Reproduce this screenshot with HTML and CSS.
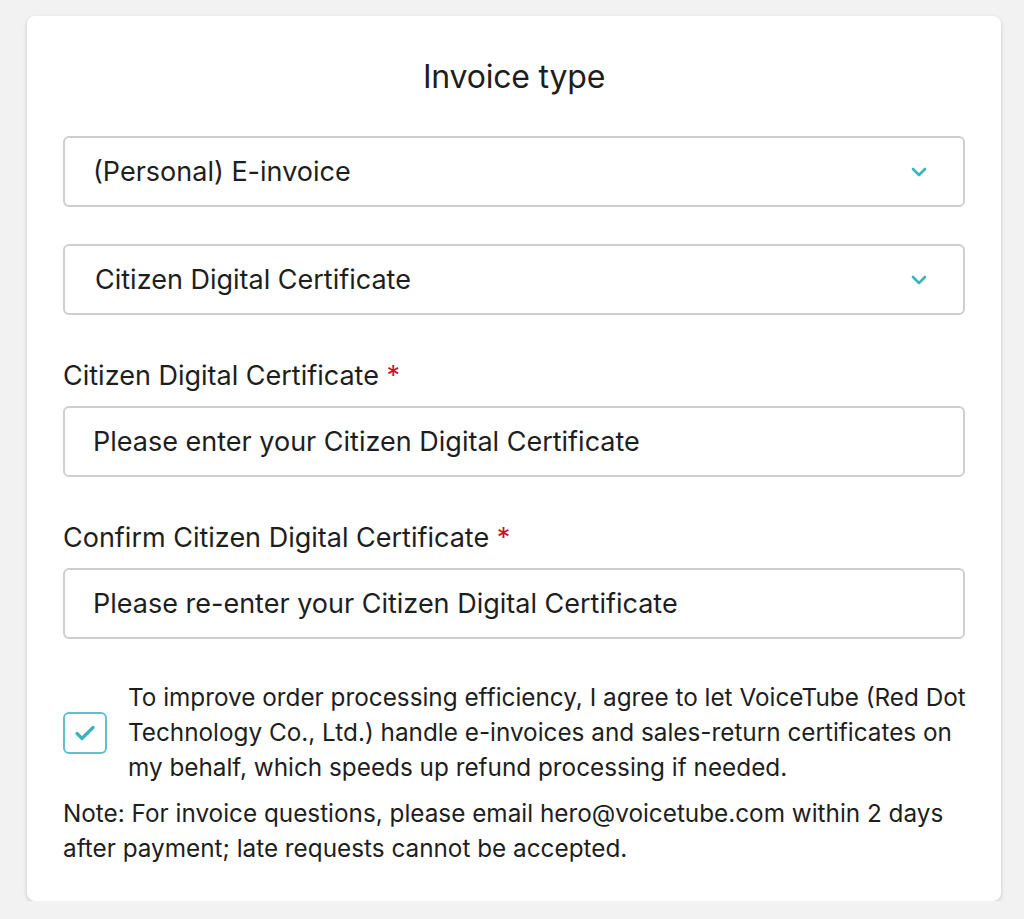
FILE: index.html
```html
<!DOCTYPE html>
<html lang="en">
<head>
    <meta charset="UTF-8">
    <title>Invoice type</title>
    <link rel="stylesheet" href="styles.css">
</head>
<body>
    <div class="card">
        <h2 class="title">Invoice type</h2>

        <div class="select">
            <span>(Personal) E-invoice</span>
            <svg class="chevron" width="16" height="10" viewBox="0 0 16 10"><path d="M2 2l6 6 6-6" fill="none" stroke="#3bb3be" stroke-width="2.6" stroke-linecap="round" stroke-linejoin="round"/></svg>
        </div>

        <div class="select second">
            <span>Citizen Digital Certificate</span>
            <svg class="chevron" width="16" height="10" viewBox="0 0 16 10"><path d="M2 2l6 6 6-6" fill="none" stroke="#3bb3be" stroke-width="2.6" stroke-linecap="round" stroke-linejoin="round"/></svg>
        </div>

        <label class="label">Citizen Digital Certificate <span class="req">*</span></label>
        <div class="input">Please enter your Citizen Digital Certificate</div>

        <label class="label">Confirm Citizen Digital Certificate <span class="req">*</span></label>
        <div class="input">Please re-enter your Citizen Digital Certificate</div>

        <div class="agree">
            <div class="checkbox">
                <svg width="22" height="18" viewBox="0 0 22 18"><path d="M3 9.5l5 5L19 3.5" fill="none" stroke="#3bb3be" stroke-width="3.2" stroke-linecap="round" stroke-linejoin="round"/></svg>
            </div>
            <p>To improve order processing efficiency, I agree to let VoiceTube (Red Dot Technology Co., Ltd.) handle e-invoices and sales-return certificates on my behalf, which speeds up refund processing if needed.</p>
        </div>

        <p class="note">Note: For invoice questions, please email hero@voicetube.com within 2 days after payment; late requests cannot be accepted.</p>
    </div>
</body>
</html>
```

FILE: styles.css
```css
body {
    margin: 0;
    background-color: #f2f2f2;
    font-family: Inter, 'Liberation Sans', sans-serif;
    color: #1e1e1e;
}

.card {
    width: 974px;
    margin: 16px 0 0 27px;
    padding: 37px 36px 35px;
    box-sizing: border-box;
    background-color: #fff;
    border-radius: 8px;
    box-shadow: 0 2px 4px rgba(0, 0, 0, 0.18);
}

.title {
    margin: 0 0 35px;
    text-align: center;
    font-size: 32px;
    font-weight: 400;
    line-height: 48px;
    letter-spacing: -0.2px;
}

.select,
.input {
    height: 71px;
    box-sizing: border-box;
    border: 2px solid #cfcfcf;
    border-radius: 6px;
    display: flex;
    align-items: center;
    padding: 0 28px;
    font-size: 27px;
}

.select {
    justify-content: space-between;
    padding-right: 36px;
}

.second {
    margin-top: 37px;
    padding-left: 30px;
}

.label {
    display: block;
    margin: 43px 0 12px;
    font-size: 27px;
    line-height: 36px;
}

.req {
    color: #c8102e;
}

.agree {
    display: flex;
    align-items: center;
    gap: 21px;
    margin: 41px -14px 0 0;
}

.checkbox {
    flex: none;
    width: 44px;
    height: 42px;
    box-sizing: border-box;
    border: 2px solid #5fc1c9;
    border-radius: 6px;
    display: flex;
    align-items: center;
    justify-content: center;
}

.agree p {
    margin: 0;
    font-size: 24.3px;
    line-height: 35px;
}

.note {
    margin: 11px 0 0;
    font-size: 24.3px;
    line-height: 35px;
}
```
